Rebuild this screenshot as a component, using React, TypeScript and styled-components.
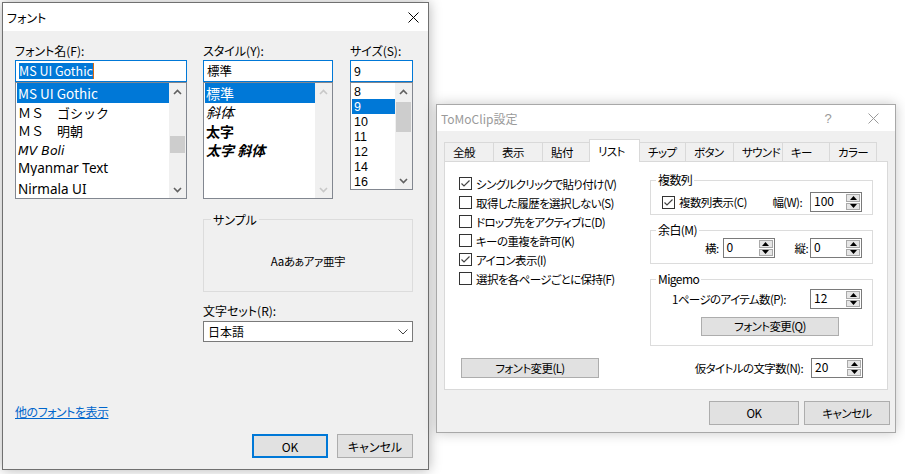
import React from 'react';
import styled, { createGlobalStyle } from 'styled-components';

const jp = `"Noto Sans CJK JP", "Noto Sans", sans-serif`;

type Face = {
  name: string;
  h: number;
  size: number;
  family?: string;
  italic?: boolean;
  bold?: boolean;
  mono?: boolean;
};

const fontNames: Face[] = [
  { name: 'MS UI Gothic', h: 20, size: 13.5 },
  { name: 'ＭＳ　ゴシック', h: 19, size: 13, mono: true },
  { name: 'ＭＳ　明朝', h: 19, size: 13, mono: true, family: `"Liberation Serif", ${jp}` },
  { name: 'MV Boli', h: 19, size: 12.5, italic: true, family: '"DejaVu Sans", sans-serif' },
  { name: 'Myanmar Text', h: 16, size: 13.5, family: '"Noto Sans", sans-serif' },
  { name: 'Nirmala UI', h: 26, size: 13.5, family: '"Noto Sans", sans-serif' },
];

const styleNames: Face[] = [
  { name: '標準', h: 20, size: 14 },
  { name: '斜体', h: 19, size: 14, italic: true },
  { name: '太字', h: 19, size: 14, bold: true },
  { name: '太字 斜体', h: 19, size: 14, italic: true, bold: true },
];

const sizes = ['8', '9', '10', '11', '12', '14', '16'];

const tabs: [string, number][] = [
  ['全般', 50],
  ['表示', 50],
  ['貼付', 48],
  ['リスト', 51],
  ['チップ', 47],
  ['ボタン', 49],
  ['サウンド', 50],
  ['キー', 48],
  ['カラー', 48],
];

const listOptions = [
  { label: 'シングルクリックで貼り付け(V)', checked: true },
  { label: '取得した履歴を選択しない(S)', checked: false },
  { label: 'ドロップ先をアクティブに(D)', checked: false },
  { label: 'キーの重複を許可(K)', checked: false },
  { label: 'アイコン表示(I)', checked: true },
  { label: '選択を各ページごとに保持(F)', checked: false },
];

const CloseIcon = ({ color }: { color: string }) => (
  <svg width="11" height="11" viewBox="0 0 11 11">
    <path d="M0.5 0.5 L10.5 10.5 M10.5 0.5 L0.5 10.5" stroke={color} strokeWidth="1" fill="none" />
  </svg>
);

const Chevron = ({ up, color }: { up?: boolean; color: string }) => (
  <svg width="9" height="6" viewBox="0 0 9 6">
    <polyline
      points={up ? '1,5 4.5,1.5 8,5' : '1,1 4.5,4.5 8,1'}
      fill="none"
      stroke={color}
      strokeWidth="1.6"
    />
  </svg>
);

const ComboArrow = () => (
  <svg width="10" height="6" viewBox="0 0 10 6">
    <polyline points="0.5,0.5 5,5 9.5,0.5" fill="none" stroke="#444" strokeWidth="1" />
  </svg>
);

const SpinArrow = ({ up }: { up?: boolean }) => (
  <svg width="7" height="4" viewBox="0 0 7 4">
    <polygon points={up ? '0,4 3.5,0 7,4' : '0,0 3.5,4 7,0'} fill="#000" />
  </svg>
);

const ListScroll = ({ thumb, disabled }: { thumb?: [number, number]; disabled?: boolean }) => {
  const color = disabled ? '#c8c8c8' : '#606060';
  return (
    <ScrollTrack>
      <ScrollArrow>
        <Chevron up color={color} />
      </ScrollArrow>
      <ThumbArea>{thumb && <Thumb $top={thumb[0]} $h={thumb[1]} />}</ThumbArea>
      <ScrollArrow>
        <Chevron color={color} />
      </ScrollArrow>
    </ScrollTrack>
  );
};

const FaceItem = ({ face, selected }: { face: Face; selected?: boolean }) => (
  <ListItem
    $h={face.h}
    $size={face.size}
    $family={face.family}
    $italic={face.italic}
    $bold={face.bold}
    $mono={face.mono}
    $selected={selected}
  >
    {face.name}
  </ListItem>
);

const CheckBox = ({ checked }: { checked?: boolean }) => (
  <Box>
    {checked && (
      <svg width="11" height="11" viewBox="0 0 11 11">
        <polyline points="1.5,5.5 4,8 9.5,2.5" fill="none" stroke="#444" strokeWidth="1.2" />
      </svg>
    )}
  </Box>
);

const SpinBox = ({ value }: { value: string }) => (
  <Spin>
    <SpinValue>{value}</SpinValue>
    <SpinButtons>
      <SpinButton>
        <SpinArrow up />
      </SpinButton>
      <SpinButton>
        <SpinArrow />
      </SpinButton>
    </SpinButtons>
  </Spin>
);

const FontDialog = () => (
  <Window $x={2} $y={2} $w={427} $h={468}>
    <TitleBar $h={28}>
      <TitleText>フォント</TitleText>
      <TitleButton $w={30}>
        <CloseIcon color="#000" />
      </TitleButton>
    </TitleBar>
    <FontBody>
      <FieldRow>
        <Field $w={172}>
          <FieldLabel>フォント名(F):</FieldLabel>
          <EditBox>
            <Highlight>MS UI Gothic</Highlight>
            <Caret />
          </EditBox>
          <ListBox $h={117}>
            <ListItems>
              {fontNames.map((f, i) => (
                <FaceItem key={f.name} face={f} selected={i === 0} />
              ))}
            </ListItems>
            <ListScroll thumb={[36, 17]} />
          </ListBox>
        </Field>
        <Field $w={130}>
          <FieldLabel>スタイル(Y):</FieldLabel>
          <EditBox>標準</EditBox>
          <ListBox $h={117}>
            <ListItems>
              {styleNames.map((f, i) => (
                <FaceItem key={f.name} face={f} selected={i === 0} />
              ))}
            </ListItems>
            <ListScroll disabled />
          </ListBox>
        </Field>
        <Field $w={63} $ml={1}>
          <FieldLabel>サイズ(S):</FieldLabel>
          <EditBox>9</EditBox>
          <ListBox $h={108}>
            <ListItems $pt={1}>
              {sizes.map((s) => (
                <SizeItem key={s} $selected={s === '9'}>
                  {s}
                </SizeItem>
              ))}
            </ListItems>
            <ListScroll thumb={[2, 30]} />
          </ListBox>
        </Field>
      </FieldRow>

      <LowerRow>
        <LowerColumn>
          <SampleGroup>
            <SampleLegend>サンプル</SampleLegend>
            <SampleText>Aaあぁアァ亜宇</SampleText>
          </SampleGroup>
          <CharsetLabel>文字セット(R):</CharsetLabel>
          <Combo>
            <span>日本語</span>
            <ComboArrow />
          </Combo>
        </LowerColumn>
      </LowerRow>

      <MoreFontsLink href="#">他のフォントを表示</MoreFontsLink>
      <FontButtons>
        <PushButton $w={76} $h={24} $default>
          OK
        </PushButton>
        <PushButton $w={76} $h={24}>
          キャンセル
        </PushButton>
      </FontButtons>
    </FontBody>
  </Window>
);

const SettingsDialog = () => (
  <Window $x={436} $y={104} $w={460} $h={329} $inactive>
    <TitleBar $h={26}>
      <TitleText $inactive>ToMoClip設定</TitleText>
      <TitleButton $w={46}>
        <HelpMark>?</HelpMark>
      </TitleButton>
      <TitleButton $w={44}>
        <CloseIcon color="#9a9a9a" />
      </TitleButton>
    </TitleBar>
    <SettingsBody>
      <TabRow>
        {tabs.map(([label, w]) => (
          <Tab key={label} $w={w} $active={label === 'リスト'}>
            {label}
          </Tab>
        ))}
      </TabRow>
      <TabPanel>
        <PanelTop>
          <CheckList>
            {listOptions.map((o) => (
              <CheckRow key={o.label}>
                <CheckBox checked={o.checked} />
                {o.label}
              </CheckRow>
            ))}
          </CheckList>

          <GroupColumn>
            <Group $h={42}>
              <GroupLegend>複数列</GroupLegend>
              <GroupRow $pt={5}>
                <CheckRow>
                  <CheckBox checked />
                  複数列表示(C)
                </CheckRow>
                <Pair $gap={8}>
                  幅(W):
                  <SpinBox value="100" />
                </Pair>
              </GroupRow>
            </Group>

            <Group $h={41} $mt={8}>
              <GroupLegend>余白(M)</GroupLegend>
              <GroupRow $pt={1} $end>
                <Pair $gap={4}>
                  横:
                  <SpinBox value="0" />
                </Pair>
                <Pair $gap={2} $ml={20}>
                  縦:
                  <SpinBox value="0" />
                </Pair>
              </GroupRow>
            </Group>

            <Group $h={74} $mt={8}>
              <GroupLegend>Migemo</GroupLegend>
              <GroupRow $pt={3} $pl={10}>
                <Pair $gap={0}>1ページのアイテム数(P):</Pair>
                <SpinBox value="12" />
              </GroupRow>
              <GroupButton $w={138} $h={19}>
                フォント変更(Q)
              </GroupButton>
            </Group>
          </GroupColumn>
        </PanelTop>

        <PanelBottom>
          <PushButton $w={138} $h={20}>
            フォント変更(L)
          </PushButton>
          <Pair $gap={8} $mr={10}>
            仮タイトルの文字数(N):
            <SpinBox value="20" />
          </Pair>
        </PanelBottom>
      </TabPanel>

      <SettingsButtons>
        <PushButton $w={90} $h={24}>
          OK
        </PushButton>
        <PushButton $w={86} $h={24}>
          キャンセル
        </PushButton>
      </SettingsButtons>
    </SettingsBody>
  </Window>
);

export default function App() {
  return (
    <>
      <GlobalStyle />
      <Desktop>
        <FontDialog />
        <SettingsDialog />
      </Desktop>
    </>
  );
}

const GlobalStyle = createGlobalStyle`
  * {
    box-sizing: border-box;
  }
  html,
  body {
    margin: 0;
    padding: 0;
    background: #ffffff;
  }
  body {
    font-family: ${jp};
    font-size: 12px;
    color: #000;
    font-feature-settings: "palt";
  }
`;

const Desktop = styled.div`
  position: relative;
  width: 905px;
  height: 474px;
  overflow: hidden;
`;

// windows sit on a free desktop, so they are placed by coordinates
const Window = styled.div<{ $x: number; $y: number; $w: number; $h: number; $inactive?: boolean }>`
  position: absolute;
  left: ${(p) => p.$x}px;
  top: ${(p) => p.$y}px;
  width: ${(p) => p.$w}px;
  height: ${(p) => p.$h}px;
  border: 1px solid ${(p) => (p.$inactive ? '#a8a8a8' : '#707070')};
  background: #f0f0f0;
  box-shadow: 0 0 12px rgba(0, 0, 0, ${(p) => (p.$inactive ? 0.22 : 0.3)});
  display: flex;
  flex-direction: column;
`;

const TitleBar = styled.div<{ $h: number }>`
  height: ${(p) => p.$h}px;
  background: #ffffff;
  display: flex;
  align-items: stretch;
  flex-shrink: 0;
`;

const TitleText = styled.div<{ $inactive?: boolean }>`
  flex: 1;
  display: flex;
  align-items: center;
  padding-left: 4px;
  color: ${(p) => (p.$inactive ? '#9a9a9a' : '#000')};
`;

const TitleButton = styled.div<{ $w: number }>`
  width: ${(p) => p.$w}px;
  display: flex;
  align-items: center;
  justify-content: center;
`;

const HelpMark = styled.span`
  font-family: "Liberation Sans", sans-serif;
  font-size: 13px;
  color: #9a9a9a;
`;

/* ---------- font dialog ---------- */

const FontBody = styled.div`
  flex: 1;
  display: flex;
  flex-direction: column;
  padding: 12px 15px 0 12px;
`;

const FieldRow = styled.div`
  display: flex;
  gap: 16px;
`;

const Field = styled.div<{ $w: number; $ml?: number }>`
  width: ${(p) => p.$w}px;
  margin-left: ${(p) => p.$ml || 0}px;
  display: flex;
  flex-direction: column;
`;

const FieldLabel = styled.div`
  height: 15px;
  line-height: 15px;
  margin-bottom: 2px;
  white-space: nowrap;
`;

const EditBox = styled.div`
  height: 22px;
  border: 1px solid #0078d7;
  background: #ffffff;
  padding: 0 3px;
  display: flex;
  align-items: center;
  font-size: 12.5px;
  line-height: 16px;
`;

const Highlight = styled.span`
  background: #0078d7;
  color: #ffffff;
`;

const Caret = styled.span`
  width: 1px;
  height: 16px;
  background: #d86a10;
`;

const ListBox = styled.div<{ $h: number }>`
  height: ${(p) => p.$h}px;
  border: 1px solid #828790;
  background: #ffffff;
  display: flex;
`;

const ListItems = styled.div<{ $pt?: number }>`
  flex: 1;
  min-width: 0;
  overflow: hidden;
  padding: ${(p) => p.$pt || 0}px 0 0 1px;
`;

const ListItem = styled.div<{
  $h: number;
  $size: number;
  $family?: string;
  $italic?: boolean;
  $bold?: boolean;
  $mono?: boolean;
  $selected?: boolean;
}>`
  height: ${(p) => p.$h}px;
  line-height: ${(p) => p.$h}px;
  padding-left: 1px;
  white-space: nowrap;
  overflow: hidden;
  font-size: ${(p) => p.$size}px;
  font-family: ${(p) => p.$family || jp};
  font-style: ${(p) => (p.$italic ? 'italic' : 'normal')};
  font-weight: ${(p) => (p.$bold ? 700 : 400)};
  font-feature-settings: ${(p) => (p.$mono ? 'normal' : '"palt"')};
  background: ${(p) => (p.$selected ? '#0078d7' : 'transparent')};
  color: ${(p) => (p.$selected ? '#ffffff' : '#000')};
`;

const SizeItem = styled.div<{ $selected?: boolean }>`
  height: 15px;
  padding: 1px 0 0 2px;
  line-height: 14px;
  font-family: "Liberation Sans", sans-serif;
  font-size: 12.5px;
  background: ${(p) => (p.$selected ? '#0078d7' : 'transparent')};
  color: ${(p) => (p.$selected ? '#ffffff' : '#000')};
`;

const ScrollTrack = styled.div`
  width: 17px;
  background: #f0f0f0;
  display: flex;
  flex-direction: column;
`;

const ScrollArrow = styled.div`
  height: 17px;
  display: flex;
  align-items: center;
  justify-content: center;
`;

const ThumbArea = styled.div`
  flex: 1;
`;

const Thumb = styled.div<{ $top: number; $h: number }>`
  margin: ${(p) => p.$top}px 1px 0;
  height: ${(p) => p.$h}px;
  background: #cdcdcd;
`;

const LowerRow = styled.div`
  display: flex;
  padding-left: 188px;
`;

const LowerColumn = styled.div`
  width: 210px;
  display: flex;
  flex-direction: column;
`;

const SampleGroup = styled.fieldset`
  margin: 13px 0 0;
  padding: 4px 0 0;
  min-width: 0;
  height: 80px;
  border: 1px solid #dcdcdc;
`;

const SampleLegend = styled.legend`
  margin-left: 7px;
  padding: 0 2px;
  line-height: 15px;
`;

const SampleText = styled.div`
  height: 60px;
  display: flex;
  align-items: center;
  justify-content: center;
  font-size: 11.5px;
  letter-spacing: -0.4px;
`;

const CharsetLabel = styled.div`
  margin-top: 11px;
  line-height: 15px;
`;

const Combo = styled.div`
  margin-top: 3px;
  height: 21px;
  border: 1px solid #7a7a7a;
  background: #ffffff;
  display: flex;
  align-items: center;
  justify-content: space-between;
  padding: 0 4px 0 4px;
  line-height: 15px;
`;

const MoreFontsLink = styled.a`
  margin-top: 62px;
  align-self: flex-start;
  line-height: 15px;
  color: #0066cc;
  text-decoration: underline;
  letter-spacing: -0.5px;
`;

const FontButtons = styled.div`
  margin-top: 15px;
  display: flex;
  justify-content: flex-end;
  gap: 9px;
`;

const PushButton = styled.button<{ $w: number; $h: number; $default?: boolean }>`
  width: ${(p) => p.$w}px;
  height: ${(p) => p.$h}px;
  padding: 0;
  font: inherit;
  letter-spacing: inherit;
  font-feature-settings: "palt";
  line-height: 15px;
  color: #000;
  background: #e1e1e1;
  border: ${(p) => (p.$default ? '2px solid #0078d7' : '1px solid #adadad')};
`;

/* ---------- ToMoClip settings ---------- */

const SettingsBody = styled.div`
  flex: 1;
  display: flex;
  flex-direction: column;
  padding: 8px 7px 0;
  font-size: 11.5px;
  letter-spacing: -0.6px;
`;

const TabRow = styled.div`
  height: 23px;
  display: flex;
  align-items: flex-end;
  position: relative;
  z-index: 1;
`;

const Tab = styled.div<{ $w: number; $active?: boolean }>`
  width: ${(p) => p.$w}px;
  height: ${(p) => (p.$active ? 23 : 20)}px;
  margin-left: -1px;
  padding-left: 8px;
  border: 1px solid #d9d9d9;
  border-bottom: ${(p) => (p.$active ? 'none' : '1px solid #d9d9d9')};
  background: ${(p) => (p.$active ? '#ffffff' : '#f0f0f0')};
  display: flex;
  align-items: center;
  white-space: nowrap;
  overflow: hidden;
  font-size: 11.5px;
  position: relative;
  z-index: ${(p) => (p.$active ? 1 : 0)};

  &:first-child {
    margin-left: 0;
  }
`;

const TabPanel = styled.div`
  margin-top: -1px;
  height: 229px;
  border: 1px solid #d9d9d9;
  background: #ffffff;
  padding: 12px 14px 0;
  display: flex;
  flex-direction: column;
`;

const PanelTop = styled.div`
  display: flex;
  justify-content: space-between;
`;

const CheckList = styled.div`
  display: flex;
  flex-direction: column;
`;

const CheckRow = styled.div`
  height: 19px;
  display: flex;
  align-items: center;
  gap: 4px;
  white-space: nowrap;
`;

const Box = styled.span`
  width: 13px;
  height: 13px;
  flex-shrink: 0;
  border: 1px solid #333333;
  background: #ffffff;
  display: inline-flex;
  align-items: center;
  justify-content: center;
`;

const GroupColumn = styled.div`
  width: 223px;
  margin-top: -1px;
  display: flex;
  flex-direction: column;
`;

const Group = styled.fieldset<{ $h: number; $mt?: number }>`
  margin: ${(p) => p.$mt || 0}px 0 0;
  padding: 0 10px 0 11px;
  min-width: 0;
  height: ${(p) => p.$h}px;
  border: 1px solid #dcdcdc;
  display: flex;
  flex-direction: column;
`;

const GroupLegend = styled.legend`
  margin-left: -6px;
  padding: 0 2px;
  line-height: 14px;
  font-size: 12px;
`;

const GroupRow = styled.div<{ $pt: number; $pl?: number; $end?: boolean }>`
  padding-top: ${(p) => p.$pt}px;
  padding-left: ${(p) => p.$pl || 0}px;
  display: flex;
  align-items: center;
  justify-content: ${(p) => (p.$end ? 'flex-end' : 'space-between')};
`;

const Pair = styled.div<{ $gap: number; $ml?: number; $mr?: number }>`
  display: flex;
  align-items: center;
  gap: ${(p) => p.$gap}px;
  margin-left: ${(p) => p.$ml || 0}px;
  margin-right: ${(p) => p.$mr || 0}px;
  white-space: nowrap;
`;

const Spin = styled.div`
  width: 52px;
  height: 20px;
  border: 1px solid #7a7a7a;
  background: #ffffff;
  display: flex;
`;

const SpinValue = styled.span`
  flex: 1;
  padding-left: 3px;
  line-height: 16px;
  font-size: 12px;
  letter-spacing: 0;
`;

const SpinButtons = styled.div`
  width: 16px;
  display: flex;
  flex-direction: column;
  gap: 1px;
  padding: 1px;
`;

const SpinButton = styled.div`
  flex: 1;
  border: 1px solid #a9a9a9;
  background: #e6e6e6;
  display: flex;
  align-items: center;
  justify-content: center;
`;

const GroupButton = styled(PushButton)`
  margin: 8px 0 0 39px;
`;

const PanelBottom = styled.div`
  margin-top: 12px;
  padding-left: 2px;
  display: flex;
  align-items: center;
  justify-content: space-between;
`;

const SettingsButtons = styled.div`
  margin: 11px -2px 0 0;
  display: flex;
  justify-content: flex-end;
  gap: 5px;
`;
